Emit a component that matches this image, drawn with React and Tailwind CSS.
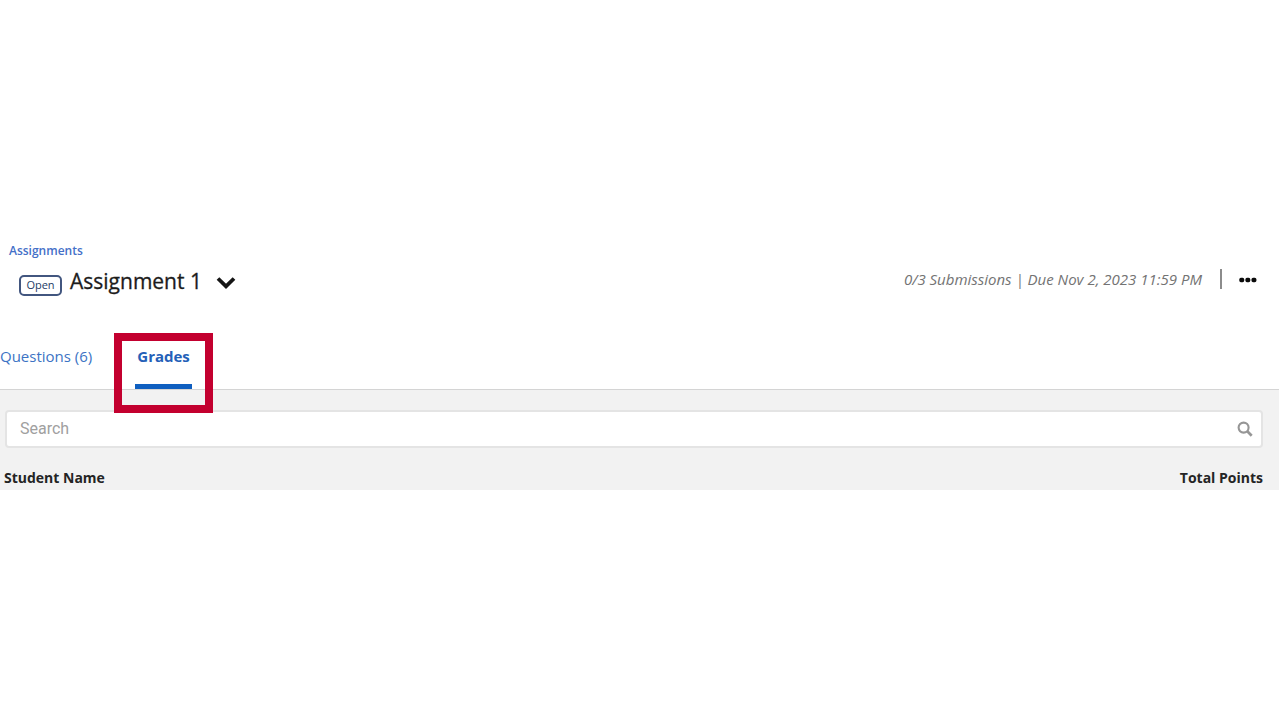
import React from "react";

function PageHeader() {
  return (
    <header>
      <nav aria-label="Breadcrumb" className="flex h-5 items-center pt-0.5 pl-[9px]">
        <a href="#assignments" className="text-[12px] leading-5 font-semibold text-[#4470c8]">
          Assignments
        </a>
      </nav>
      <div className="flex h-10 items-center justify-between">
        <div className="flex items-center pl-[19px]">
          <span className="mt-[10px] mr-2 flex h-[21px] w-[43px] items-center justify-center rounded-[5px] border-2 border-[#42567f] text-[11px] leading-4 text-[#243c66]">
            Open
          </span>
          <h1 className="pt-0.5 text-[21px] leading-8 font-medium text-[#1c1c1c] [-webkit-text-stroke:0.3px_#1c1c1c]">
            Assignment 1
          </h1>
          <button type="button" aria-label="Assignment menu" className="ml-[14px] pt-1.5">
            <svg width="20" height="14" viewBox="0 0 20 14" fill="none" stroke="#151515" strokeWidth="3.8">
              <path d="M2 2.5 L10 10.3 L18 2.5" />
            </svg>
          </button>
        </div>
        <div className="flex items-center pr-[23px] pb-0.5">
          <p className="text-[15px] leading-6 text-[#737373] italic">
            0/3 Submissions | Due Nov 2, 2023 11:59 PM
          </p>
          <span className="ml-[18px] h-5 w-0.5 bg-[#8c8c8c]" />
          <button type="button" aria-label="More options" className="ml-[17px] pt-0.5">
            <svg width="18" height="6" viewBox="0 0 18 6" fill="#0a0a0a">
              <rect x="0.3" y="0.8" width="4.9" height="4.4" rx="1.6" />
              <rect x="6.4" y="0.8" width="4.9" height="4.4" rx="1.6" />
              <rect x="12.5" y="0.8" width="4.9" height="4.4" rx="1.6" />
            </svg>
          </button>
        </div>
      </div>
    </header>
  );
}

function Tabs() {
  return (
    <nav aria-label="Assignment sections" className="mr-px flex border-b border-[#d4d4d4] pt-11">
      <a href="#questions" className="text-[15px] leading-6 text-[#3c73c4]">
        Questions (6)
      </a>
      <div className="relative ml-[43px]">
        <a
          href="#grades"
          aria-current="page"
          className="block border-b-5 border-[#0f5fc0] px-0.5 pb-4 text-[15px] leading-6 font-bold text-[#2460b8]"
        >
          Grades
        </a>
        <div className="pointer-events-none absolute -top-[11px] -right-[21px] -bottom-6 -left-[21px] border-8 border-[#c3002f]" />
      </div>
    </nav>
  );
}

function Gradebook() {
  return (
    <main className="mr-px bg-[#f2f2f2] pt-5">
      <div className="mr-4 ml-[5px] flex h-[38px] items-center rounded-[4px] border-2 border-[#e4e4e4] bg-white pr-2 pl-[13px]">
        <input
          type="search"
          aria-label="Search"
          placeholder="Search"
          className="min-w-0 flex-1 bg-transparent font-['Roboto',sans-serif] text-[16px] leading-6 outline-none placeholder:text-[#a0a0a0]"
        />
        <button type="button" aria-label="Submit search">
          <svg width="16" height="16" viewBox="0 0 16 16" fill="none" stroke="#969696">
            <circle cx="6.6" cy="6.6" r="5" strokeWidth="2.1" />
            <path d="M10.3 10.3 L14.7 14.7" strokeWidth="2.7" />
          </svg>
        </button>
      </div>
      <table className="w-full text-[14px] leading-6 font-bold text-[#242424]">
        <thead>
          <tr>
            <th scope="col" className="pt-[18px] pl-1 text-left">
              Student Name
            </th>
            <th scope="col" className="pt-[18px] pr-4 text-right">
              Total Points
            </th>
          </tr>
        </thead>
      </table>
    </main>
  );
}

export default function App() {
  return (
    <div className="min-h-screen bg-white pt-60 font-['Open_Sans',sans-serif]">
      <PageHeader />
      <Tabs />
      <Gradebook />
    </div>
  );
}
